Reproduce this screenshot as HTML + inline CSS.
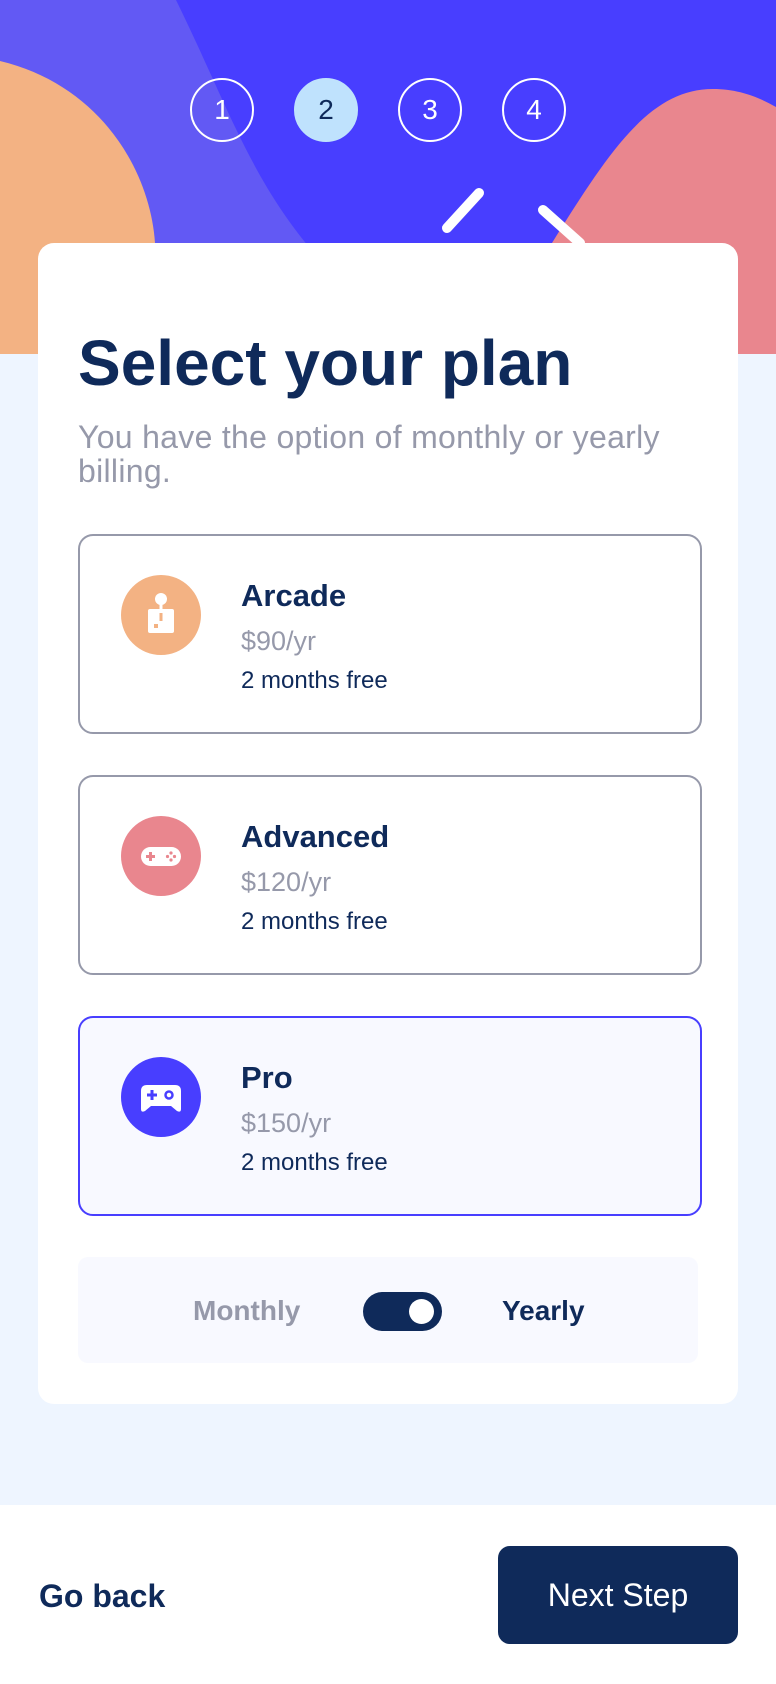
<!DOCTYPE html>
<html><head><meta charset="utf-8"><style>
*{margin:0;padding:0;box-sizing:border-box}
body{width:776px;height:1684px;background:#eef5ff;font-family:"Liberation Sans",sans-serif;position:relative;overflow:hidden}
.abs{position:absolute}
.step{position:absolute;top:78px;width:64px;height:64px;border-radius:50%;border:2px solid #fff;color:#fff;font-size:28px;display:flex;align-items:center;justify-content:center}
.card{left:38px;top:243px;width:700px;height:1161px;background:#fff;border-radius:16px}
h1{position:absolute;left:78px;top:326px;font-size:64px;color:#0f2a5a;font-weight:bold;letter-spacing:0px}
.sub{position:absolute;left:78px;top:420px;width:640px;font-size:32px;line-height:34px;color:#9699aa;letter-spacing:0.3px}
.plan{position:absolute;left:78px;width:624px;height:200px;border:2px solid #9699aa;border-radius:15px;background:#fff}
.plan.sel{border-color:#483eff;background:#f8f9ff}
.ic{position:absolute;left:41px;top:39px;width:80px;height:80px;border-radius:50%}
.name{position:absolute;left:161px;top:42px;font-size:31px;font-weight:bold;color:#0f2a5a}
.price{position:absolute;left:161px;top:90px;font-size:27px;color:#9699aa}
.free{position:absolute;left:161px;top:131px;font-size:24px;color:#0f2a5a}
</style></head><body>
<svg class="abs" style="left:0;top:0" width="776" height="354" viewBox="0 0 776 354">
<rect width="776" height="354" fill="#483eff"/>
<path d="M0 0 H176 C230 110 250 180 320 260 L330 354 H0Z" fill="#6259f4"/>
<path d="M0 61 C100 85 150 170 155 243 V354 H0Z" fill="#f3b283"/>
<path d="M480 354 L552 243 C610 150 650 89 713 89 C740 89 760 98 776 107 V354Z" fill="#e9868e"/>
<line x1="479" y1="193" x2="447" y2="228" stroke="#fff" stroke-width="10" stroke-linecap="round"/>
<line x1="543" y1="210" x2="580" y2="243" stroke="#fff" stroke-width="10" stroke-linecap="round"/>
</svg>
<div class="step" style="left:190px">1</div>
<div class="step" style="left:294px;background:#bfe2fd;border-color:#bfe2fd;color:#0f2a5a">2</div>
<div class="step" style="left:398px">3</div>
<div class="step" style="left:502px">4</div>
<div class="abs card"></div>
<h1>Select your plan</h1>
<div class="sub">You have the option of monthly or yearly billing.</div>

<div class="plan" style="top:534px">
<div class="ic" style="background:#f3b283"><svg width="80" height="80" viewBox="0 0 80 80"><circle cx="40" cy="24" r="6" fill="#fff"/><rect x="38.5" y="28" width="3" height="10" fill="#fff"/><rect x="27" y="34" width="26" height="24" rx="2" fill="#fff"/><rect x="38.5" y="38" width="3" height="8" fill="#f3b283"/><rect x="33" y="49" width="4" height="4" fill="#f3b283"/></svg></div>
<div class="name">Arcade</div><div class="price">$90/yr</div><div class="free">2 months free</div></div>

<div class="plan" style="top:775px">
<div class="ic" style="background:#e9868e"><svg width="80" height="80" viewBox="0 0 80 80"><rect x="20" y="31" width="40" height="19" rx="9.5" fill="#fff"/><rect x="25" y="39" width="9" height="3" fill="#e9868e"/><rect x="28" y="36" width="3" height="9" fill="#e9868e"/><circle cx="50" cy="37" r="1.6" fill="#e9868e"/><circle cx="50" cy="44" r="1.6" fill="#e9868e"/><circle cx="46.5" cy="40.5" r="1.6" fill="#e9868e"/><circle cx="53.5" cy="40.5" r="1.6" fill="#e9868e"/></svg></div>
<div class="name">Advanced</div><div class="price">$120/yr</div><div class="free">2 months free</div></div>

<div class="plan sel" style="top:1016px">
<div class="ic" style="background:#483eff"><svg width="80" height="80" viewBox="0 0 80 80"><path d="M26 28 H54 Q60 28 60 34 V52 Q60 56 56 54 L50 49 H30 L24 54 Q20 56 20 52 V34 Q20 28 26 28Z" fill="#fff"/><rect x="26" y="36.5" width="10" height="3" fill="#483eff"/><rect x="29.5" y="33" width="3" height="10" fill="#483eff"/><circle cx="48" cy="38" r="3.5" fill="none" stroke="#483eff" stroke-width="2.5"/></svg></div>
<div class="name">Pro</div><div class="price">$150/yr</div><div class="free">2 months free</div></div>

<div class="abs" style="left:78px;top:1257px;width:620px;height:106px;background:#f8f9ff;border-radius:10px"></div>
<div class="abs" style="left:193px;top:1295px;font-size:28px;font-weight:bold;color:#9699aa">Monthly</div>
<div class="abs" style="left:363px;top:1292px;width:79px;height:39px;border-radius:20px;background:#0f2a5a"></div>
<div class="abs" style="left:409px;top:1299px;width:25px;height:25px;border-radius:50%;background:#fff"></div>
<div class="abs" style="left:502px;top:1295px;font-size:28px;font-weight:bold;color:#0f2a5a">Yearly</div>

<div class="abs" style="left:0;top:1505px;width:776px;height:179px;background:#fff"></div>
<div class="abs" style="left:39px;top:1578px;font-size:32px;font-weight:bold;color:#0f2a5a">Go back</div>
<div class="abs" style="left:498px;top:1546px;width:240px;height:98px;border-radius:12px;background:#0f2a5a;color:#fff;font-size:32px;display:flex;align-items:center;justify-content:center">Next Step</div>
</body></html>
